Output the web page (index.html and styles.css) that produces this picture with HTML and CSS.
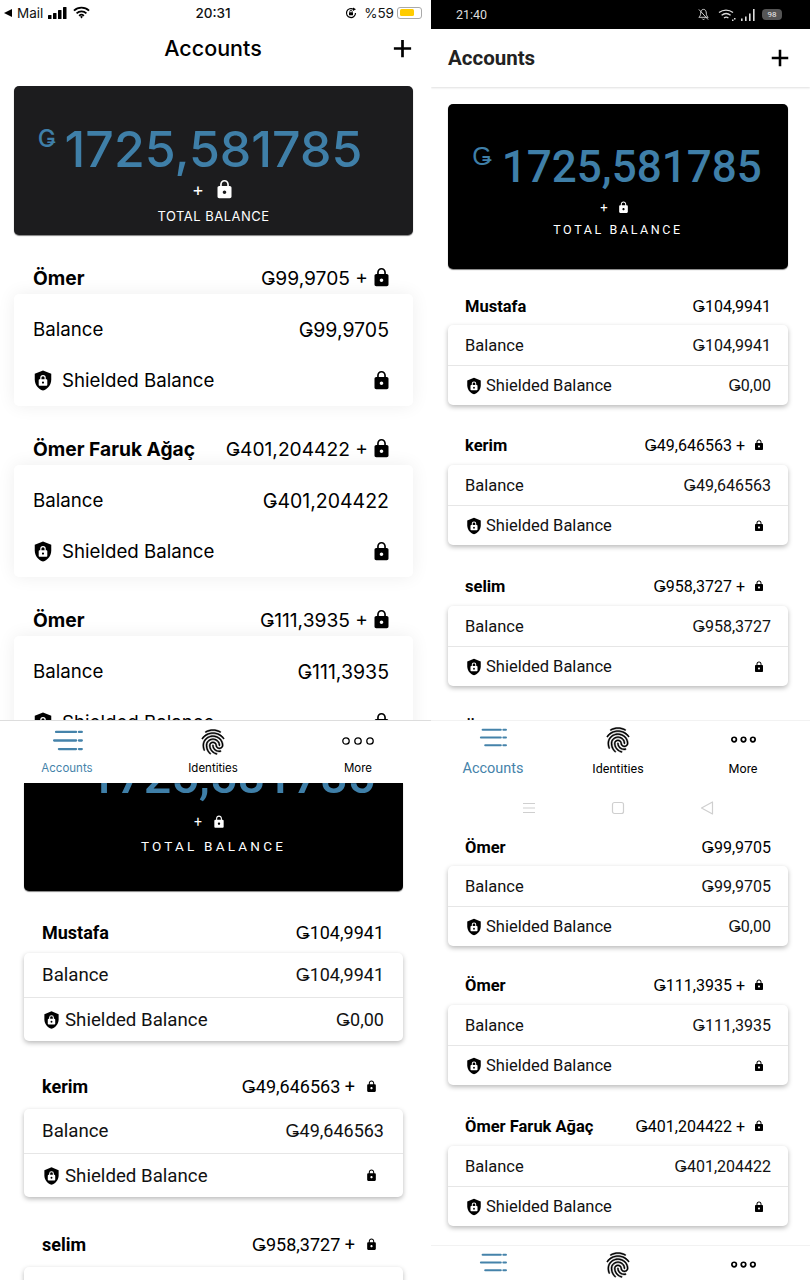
FILE: index.html
```html
<!DOCTYPE html>
<html lang="en">
<head>
    <meta charset="UTF-8">
    <title>Accounts</title>
    <link rel="stylesheet" href="styles.css">
</head>
<body>

<svg class="sprites" aria-hidden="true">
    <symbol id="lock" viewBox="0 0 24 24"><path d="M18 8h-1V6c0-2.760-2.240-5-5-5S7 3.240 7 6v2H6c-1.100 0-2 .9-2 2v10c0 1.100.9 2 2 2h12c1.100 0 2-.9 2-2V10c0-1.100-.9-2-2-2zm-6 9c-1.100 0-2-.9-2-2s.9-2 2-2 2 .9 2 2-.9 2-2 2zm3.100-9H8.900V6c0-1.710 1.390-3.100 3.100-3.100 1.710 0 3.100 1.390 3.100 3.100v2z"/></symbol>
    <symbol id="shield" viewBox="0 0 24 24">
        <path d="M12 1 3 4.600V11c0 5.550 3.840 10.740 9 12 5.160-1.260 9-6.450 9-12V4.600z"/>
        <path fill="#fff" d="M15.600 10.500H15V9a3 3 0 0 0-6 0v1.500h-.6c-.6 0-1.100.5-1.100 1.100v5c0 .6.5 1.100 1.100 1.100h7.200c.6 0 1.100-.5 1.100-1.100v-5c0-.6-.5-1.100-1.100-1.100zM12 15.500a1.200 1.200 0 1 1 0-2.400 1.200 1.200 0 0 1 0 2.400zm1.700-5h-3.400V9a1.700 1.700 0 0 1 3.400 0z"/>
    </symbol>
    <symbol id="plus" viewBox="0 0 24 24"><path d="M12 3v18M3 12h18" fill="none" stroke="currentColor" stroke-width="2.800"/></symbol>
    <symbol id="list" viewBox="0 0 32 22">
        <path d="M4 2h21M2 11h23M7 20h18M28 2h3M28 11h3M28 20h3" fill="none" stroke="currentColor" stroke-width="2.400" stroke-linecap="round"/>
    </symbol>
    <symbol id="fingerprint" viewBox="0 0 24 24"><path d="M17.810 4.470c-.08 0-.16-.02-.23-.06C15.660 3.420 14 3 12.010 3c-1.980 0-3.860.47-5.580 1.410-.24.13-.54.04-.68-.2-.13-.24-.04-.55.2-.68C7.820 2.520 9.860 2 12.010 2c2.130 0 3.990.47 6.030 1.520.25.13.34.43.22.67-.09.18-.26.28-.45.28zM3.500 9.720c-.1 0-.2-.03-.29-.09-.23-.16-.28-.47-.12-.7.99-1.400 2.250-2.500 3.750-3.270C9.980 4.040 14 4.030 17.150 5.650c1.500.77 2.760 1.860 3.750 3.250.16.22.11.54-.12.7-.23.16-.54.11-.7-.12-.9-1.260-2.040-2.250-3.390-2.940-2.870-1.470-6.540-1.470-9.400.01-1.360.7-2.500 1.700-3.400 2.960-.08.14-.23.21-.39.21zm6.250 12.070c-.13 0-.26-.05-.35-.15-.87-.87-1.340-1.430-2.010-2.640-.69-1.230-1.050-2.730-1.050-4.340 0-2.970 2.540-5.390 5.660-5.390s5.660 2.420 5.660 5.390c0 .28-.22.5-.5.5s-.5-.22-.5-.5c0-2.420-2.090-4.390-4.660-4.390s-4.660 1.970-4.660 4.390c0 1.440.32 2.770.93 3.850.64 1.150 1.080 1.640 1.850 2.420.19.2.19.51 0 .71-.11.1-.24.15-.37.15zm7.170-1.850c-1.190 0-2.240-.3-3.100-.89-1.490-1.010-2.380-2.650-2.380-4.390 0-.28.22-.5.5-.5s.5.22.5.5c0 1.410.72 2.740 1.940 3.560.71.48 1.540.71 2.540.71.24 0 .64-.03 1.040-.1.27-.05.53.13.58.41.05.27-.13.53-.41.58-.57.11-1.070.12-1.210.12zM14.910 22c-.04 0-.09-.01-.13-.02-1.590-.44-2.630-1.030-3.720-2.100-1.400-1.390-2.170-3.240-2.170-5.220 0-1.620 1.380-2.940 3.080-2.940s3.080 1.320 3.080 2.940c0 1.070.93 1.940 2.080 1.940s2.080-.87 2.080-1.940c0-3.770-3.250-6.830-7.250-6.830-2.840 0-5.440 1.580-6.610 4.030-.39.81-.59 1.760-.59 2.800 0 .78.07 2.010.67 3.610.1.26-.03.55-.29.64-.26.1-.55-.04-.64-.29-.49-1.310-.73-2.610-.73-3.960 0-1.200.23-2.290.68-3.240 1.330-2.790 4.280-4.600 7.510-4.600 4.550 0 8.250 3.510 8.250 7.830 0 1.620-1.380 2.940-3.080 2.940s-3.080-1.320-3.080-2.940c0-1.070-.93-1.940-2.080-1.940s-2.080.87-2.080 1.940c0 1.710.66 3.310 1.870 4.510.95.94 1.860 1.460 3.270 1.850.27.07.42.35.35.61-.05.23-.26.38-.47.38z" stroke="currentColor" stroke-width=".35"/></symbol>
    <symbol id="dots" viewBox="0 0 32 8">
        <g fill="none" stroke="currentColor" stroke-width="1.300"><circle cx="4" cy="4" r="3.200"/><circle cx="16" cy="4" r="3.200"/><circle cx="28" cy="4" r="3.200"/></g>
    </symbol>
    <symbol id="dots-small" viewBox="0 0 32 8">
        <g fill="none" stroke="currentColor" stroke-width="2.200"><circle cx="4" cy="4" r="2.900"/><circle cx="16" cy="4" r="2.900"/><circle cx="28" cy="4" r="2.900"/></g>
    </symbol>
</svg>

<div class="collage">
    <div class="column column-left">

        <!-- iphone, top left -->
        <section class="pane ios">
            <div class="ios-status">
                <div class="status-side">
                    <span class="back-arrow"></span><span>Mail</span>
                    <svg class="signal" viewBox="0 0 20 12"><rect x="0" y="8" width="3.500" height="4" rx=".6"/><rect x="5" y="6" width="3.500" height="6" rx=".6"/><rect x="10" y="3" width="3.500" height="9" rx=".6"/><rect x="15" y="0" width="3.500" height="12" rx=".6"/></svg>
                    <svg class="wifi" viewBox="0 0 18 13"><path d="M1 4.600a11.500 11.500 0 0 1 16 0M3.800 7.400a7.500 7.500 0 0 1 10.400 0M6.500 10a3.600 3.600 0 0 1 5 0" fill="none" stroke="#000" stroke-width="1.900"/><path d="M7.500 11 9 12.800l1.500-1.800a2 2 0 0 0-3 0z"/></svg>
                </div>
                <div class="status-time">20:31</div>
                <div class="status-side status-end">
                    <svg class="rotation" viewBox="0 0 12 12"><path d="M10.500 6A4.500 4.500 0 1 1 8.500 2.300" fill="none" stroke="#000" stroke-width="1.200"/><path d="M8 .5v3.400L11 2.300z"/><rect x="4" y="5.300" width="4" height="3" rx=".5"/><path d="M4.800 5.500V4.500a1.200 1.200 0 0 1 2.400 0v1" fill="none" stroke="#000" stroke-width=".8"/></svg>
                    <span>%59</span>
                    <span class="ios-battery"><span class="ios-battery-level"></span></span>
                </div>
            </div>
            <header class="bar">
                <h1 class="bar-title">Accounts</h1>
                <svg class="bar-plus"><use href="#plus"/></svg>
            </header>
            <div class="scroll">
                <div class="total">
                    <div class="total-amount"><span class="total-sign">Ǥ</span><span>1725,581785</span></div>
                    <div class="total-plus">+ <svg class="lock"><use href="#lock"/></svg></div>
                    <div class="total-label">TOTAL BALANCE</div>
                </div>
                <div class="account">
                    <div class="account-head"><span class="account-name">Ömer</span><span class="account-sum">Ǥ99,9705 + <svg class="lock"><use href="#lock"/></svg></span></div>
                    <div class="card">
                        <div class="card-row"><span>Balance</span><span>Ǥ99,9705</span></div>
                        <div class="card-row"><span class="shielded"><svg class="shield"><use href="#shield"/></svg>Shielded Balance</span><svg class="lock"><use href="#lock"/></svg></div>
                    </div>
                </div>
                <div class="account">
                    <div class="account-head"><span class="account-name">Ömer Faruk Ağaç</span><span class="account-sum">Ǥ401,204422 + <svg class="lock"><use href="#lock"/></svg></span></div>
                    <div class="card">
                        <div class="card-row"><span>Balance</span><span>Ǥ401,204422</span></div>
                        <div class="card-row"><span class="shielded"><svg class="shield"><use href="#shield"/></svg>Shielded Balance</span><svg class="lock"><use href="#lock"/></svg></div>
                    </div>
                </div>
                <div class="account">
                    <div class="account-head"><span class="account-name">Ömer</span><span class="account-sum">Ǥ111,3935 + <svg class="lock"><use href="#lock"/></svg></span></div>
                    <div class="card">
                        <div class="card-row"><span>Balance</span><span>Ǥ111,3935</span></div>
                        <div class="card-row"><span class="shielded"><svg class="shield"><use href="#shield"/></svg>Shielded Balance</span><svg class="lock"><use href="#lock"/></svg></div>
                    </div>
                </div>
            </div>
            <nav class="tabs">
                <div class="tab tab-active"><svg class="tab-list"><use href="#list"/></svg><span>Accounts</span></div>
                <div class="tab"><svg class="tab-print"><use href="#fingerprint"/></svg><span>Identities</span></div>
                <div class="tab"><svg class="tab-dots"><use href="#dots"/></svg><span>More</span></div>
            </nav>
        </section>

        <!-- android, bottom left, scrolled -->
        <section class="pane droid-large">
            <div class="scroll">
                <div class="total total-cut">
                    <div class="total-amount"><span>1725,581785</span></div>
                    <div class="total-plus">+ <svg class="lock"><use href="#lock"/></svg></div>
                    <div class="total-label">TOTAL BALANCE</div>
                </div>
                <div class="account">
                    <div class="account-head"><span class="account-name">Mustafa</span><span class="account-sum">Ǥ104,9941</span></div>
                    <div class="card">
                        <div class="card-row"><span>Balance</span><span>Ǥ104,9941</span></div>
                        <div class="card-row"><span class="shielded"><svg class="shield"><use href="#shield"/></svg>Shielded Balance</span><span>Ǥ0,00</span></div>
                    </div>
                </div>
                <div class="account">
                    <div class="account-head"><span class="account-name">kerim</span><span class="account-sum">Ǥ49,646563 + <svg class="lock"><use href="#lock"/></svg></span></div>
                    <div class="card">
                        <div class="card-row"><span>Balance</span><span>Ǥ49,646563</span></div>
                        <div class="card-row"><span class="shielded"><svg class="shield"><use href="#shield"/></svg>Shielded Balance</span><svg class="lock"><use href="#lock"/></svg></div>
                    </div>
                </div>
                <div class="account">
                    <div class="account-head"><span class="account-name">selim</span><span class="account-sum">Ǥ958,3727 + <svg class="lock"><use href="#lock"/></svg></span></div>
                    <div class="card">
                        <div class="card-row"><span>Balance</span><span>Ǥ958,3727</span></div>
                    </div>
                </div>
            </div>
        </section>
    </div>

    <div class="column column-right">

        <!-- android, top right -->
        <section class="pane droid">
            <div class="droid-status">
                <span>21:40</span>
                <div class="status-side">
                    <svg class="bell" viewBox="0 0 14 14"><path d="M7 1.500C4.800 1.500 4 3.500 4 5.500 4 8 3 9 2 10h10c-1-1-2-2-2-4.500 0-2-.8-4-3-4zM5.700 11.500a1.400 1.400 0 0 0 2.600 0M2 1.500l10 11" fill="none" stroke="#ddd" stroke-width="1"/></svg>
                    <svg class="wifi" viewBox="0 0 18 13"><path d="M1 4.600a11.500 11.500 0 0 1 14 0M3.600 7.200a7.500 7.500 0 0 1 9 0M6 10a3.600 3.600 0 0 1 4.400 0" fill="none" stroke="#ddd" stroke-width="1.300"/><path d="M16 10h1.500v1.500H16zM14 11.500h1.500V13H14z" fill="#ddd"/></svg>
                    <svg class="signal" viewBox="0 0 15 12"><g fill="#ddd"><rect x="0" y="9.500" width="1.600" height="2.500"/><rect x="4" y="7.500" width="1.600" height="4.500"/><rect x="8" y="4.500" width="1.600" height="7.500"/><rect x="12" y="0" width="1.600" height="12"/></g></svg>
                    <span class="droid-battery">98</span>
                </div>
            </div>
            <header class="bar">
                <h1 class="bar-title">Accounts</h1>
                <svg class="bar-plus"><use href="#plus"/></svg>
            </header>
            <div class="scroll">
                <div class="total">
                    <div class="total-amount"><span class="total-sign">Ǥ</span><span>1725,581785</span></div>
                    <div class="total-plus">+ <svg class="lock"><use href="#lock"/></svg></div>
                    <div class="total-label">TOTAL BALANCE</div>
                </div>
                <div class="account">
                    <div class="account-head"><span class="account-name">Mustafa</span><span class="account-sum">Ǥ104,9941</span></div>
                    <div class="card">
                        <div class="card-row"><span>Balance</span><span>Ǥ104,9941</span></div>
                        <div class="card-row"><span class="shielded"><svg class="shield"><use href="#shield"/></svg>Shielded Balance</span><span>Ǥ0,00</span></div>
                    </div>
                </div>
                <div class="account">
                    <div class="account-head"><span class="account-name">kerim</span><span class="account-sum">Ǥ49,646563 + <svg class="lock"><use href="#lock"/></svg></span></div>
                    <div class="card">
                        <div class="card-row"><span>Balance</span><span>Ǥ49,646563</span></div>
                        <div class="card-row"><span class="shielded"><svg class="shield"><use href="#shield"/></svg>Shielded Balance</span><svg class="lock"><use href="#lock"/></svg></div>
                    </div>
                </div>
                <div class="account">
                    <div class="account-head"><span class="account-name">selim</span><span class="account-sum">Ǥ958,3727 + <svg class="lock"><use href="#lock"/></svg></span></div>
                    <div class="card">
                        <div class="card-row"><span>Balance</span><span>Ǥ958,3727</span></div>
                        <div class="card-row"><span class="shielded"><svg class="shield"><use href="#shield"/></svg>Shielded Balance</span><svg class="lock"><use href="#lock"/></svg></div>
                    </div>
                </div>
                <div class="account">
                    <div class="account-head"><span class="account-name">Ömer</span></div>
                </div>
            </div>
            <nav class="tabs">
                <div class="tab tab-active"><svg class="tab-list"><use href="#list"/></svg><span>Accounts</span></div>
                <div class="tab"><svg class="tab-print"><use href="#fingerprint"/></svg><span>Identities</span></div>
                <div class="tab"><svg class="tab-dots"><use href="#dots-small"/></svg><span>More</span></div>
            </nav>
            <div class="droid-nav">
                <svg viewBox="0 0 14 14"><path d="M1 2.500h12M1 7h12M1 11.500h12" fill="none" stroke="#cfcfcf" stroke-width="1.200"/></svg>
                <svg viewBox="0 0 14 14"><rect x="1.500" y="1.500" width="11" height="11" rx="2" fill="none" stroke="#cfcfcf" stroke-width="1.200"/></svg>
                <svg viewBox="0 0 14 14"><path d="M12.500 1v12L1.500 7z" fill="none" stroke="#cfcfcf" stroke-width="1.200" stroke-linejoin="round"/></svg>
            </div>
        </section>

        <!-- android, bottom right, scrolled -->
        <section class="pane droid droid-scrolled">
            <div class="scroll">
                <div class="account">
                    <div class="account-head"><span class="account-name">Ömer</span><span class="account-sum">Ǥ99,9705</span></div>
                    <div class="card">
                        <div class="card-row"><span>Balance</span><span>Ǥ99,9705</span></div>
                        <div class="card-row"><span class="shielded"><svg class="shield"><use href="#shield"/></svg>Shielded Balance</span><span>Ǥ0,00</span></div>
                    </div>
                </div>
                <div class="account">
                    <div class="account-head"><span class="account-name">Ömer</span><span class="account-sum">Ǥ111,3935 + <svg class="lock"><use href="#lock"/></svg></span></div>
                    <div class="card">
                        <div class="card-row"><span>Balance</span><span>Ǥ111,3935</span></div>
                        <div class="card-row"><span class="shielded"><svg class="shield"><use href="#shield"/></svg>Shielded Balance</span><svg class="lock"><use href="#lock"/></svg></div>
                    </div>
                </div>
                <div class="account">
                    <div class="account-head"><span class="account-name">Ömer Faruk Ağaç</span><span class="account-sum">Ǥ401,204422 + <svg class="lock"><use href="#lock"/></svg></span></div>
                    <div class="card">
                        <div class="card-row"><span>Balance</span><span>Ǥ401,204422</span></div>
                        <div class="card-row"><span class="shielded"><svg class="shield"><use href="#shield"/></svg>Shielded Balance</span><svg class="lock"><use href="#lock"/></svg></div>
                    </div>
                </div>
            </div>
            <nav class="tabs">
                <div class="tab tab-active"><svg class="tab-list"><use href="#list"/></svg></div>
                <div class="tab"><svg class="tab-print"><use href="#fingerprint"/></svg></div>
                <div class="tab"><svg class="tab-dots"><use href="#dots-small"/></svg></div>
            </nav>
        </section>
    </div>
</div>

</body>
</html>
```

FILE: styles.css
```css
html, body {
    margin: 0;
    padding: 0;
    background: #fff;
}
body {
    width: 810px;
    height: 1280px;
    overflow: hidden;
    color: #000;
    font-family: Roboto, sans-serif;
}
.sprites {
    display: none;
}
svg {
    display: block;
    flex: none;
}
h1 {
    margin: 0;
}

/* four screenshots side by side */
.collage {
    display: flex;
    height: 1280px;
}
.column {
    display: flex;
    flex-direction: column;
}
.column-left {
    width: 431px;
}
.column-right {
    width: 379px;
}
.pane {
    display: flex;
    flex-direction: column;
    overflow: hidden;
    background: #fff;
}
.scroll {
    flex: 1;
    min-height: 0;
    overflow: hidden;
}

/* shared parts */
.status-side {
    display: flex;
    align-items: center;
}
.bar {
    display: flex;
    align-items: center;
    justify-content: space-between;
    background: #fff;
}
.total {
    display: flex;
    flex-direction: column;
    align-items: center;
    box-sizing: border-box;
    background: #000;
    color: #fff;
    border-radius: 5px;
    box-shadow: 0 1px 1px rgba(0, 0, 0, .5);
}
.total-amount {
    display: flex;
    align-items: flex-start;
    color: #3f7fa8;
}
.total-plus {
    display: flex;
    align-items: center;
}
.account-head,
.card-row,
.account-sum,
.shielded {
    display: flex;
    align-items: center;
}
.account-head,
.card-row {
    justify-content: space-between;
}
.account-name {
    font-weight: 700;
}
.card {
    background: #fff;
    border-radius: 5px;
}
.tabs {
    display: grid;
    background: #fff;
    flex: none;
    box-sizing: border-box;
    overflow: hidden;
}
.tab {
    display: flex;
    flex-direction: column;
    align-items: center;
}
.tab-active {
    color: #4583aa;
}

/* iphone pane */
.ios {
    height: 783px;
    font-family: Inter, sans-serif;
}
.ios-status {
    display: grid;
    grid-template-columns: 1fr auto 1fr;
    align-items: center;
    height: 25px;
    padding: 0 9px 0 4px;
    font-size: 13.500px;
    color: #111;
}
.status-time {
    font-weight: 500;
}
.status-end {
    justify-content: flex-end;
}
.back-arrow {
    width: 0;
    height: 0;
    border: 4.500px solid transparent;
    border-right: 8px solid #000;
    border-left: 0;
    margin-right: 5px;
}
.ios .signal {
    width: 20px;
    height: 12px;
    margin: 0 5px;
}
.ios .wifi {
    width: 17px;
    height: 13px;
}
.rotation {
    width: 12px;
    height: 12px;
    margin-right: 7px;
}
.ios-battery {
    box-sizing: border-box;
    width: 25px;
    height: 12px;
    margin: 0 0 0 3px;
    padding: 1.500px;
    border: 1px solid #aaa;
    border-radius: 3px;
}
.ios-battery-level {
    display: block;
    width: 14px;
    height: 7px;
    background: #fc0;
    border-radius: 1.500px;
}
.ios .bar {
    height: 46px;
    justify-content: center;
    padding-right: 5px;
    position: relative;
}
.ios .bar-title {
    font-size: 21.500px;
    font-weight: 500;
}
.ios .bar-plus {
    position: absolute;
    right: 17px;
    top: 12px;
    width: 23px;
    height: 23px;
}
.ios .scroll {
    padding: 15px 18px 0 14px;
}
.ios .total {
    height: 149px;
    padding-top: 37px;
    background: #1c1c1e;
}
.ios .total-amount {
    font-size: 50px;
    font-weight: 500;
    line-height: 52px;
    padding-right: 27px;
}
.ios .total-sign {
    font-size: 24px;
    line-height: 32px;
    margin-right: 9px;
}
.ios .total-plus {
    gap: 10px;
    height: 26px;
    margin-top: 1px;
    font-size: 18px;
}
.ios .total-plus .lock {
    width: 21px;
    height: 21px;
    margin: 0;
    fill: #fff;
}
.ios .total-label {
    margin-top: 2px;
    font-size: 13px;
    line-height: 24px;
    letter-spacing: .5px;
}
.ios .account {
    padding-top: 26px;
}
.ios .account-head {
    height: 33px;
    padding: 0 24px 0 19px;
    font-size: 19.200px;
}
.ios .account-sum {
    gap: 3px;
}
.ios .lock {
    width: 21px;
    height: 21px;
    margin-right: -3px;
}
.ios .card {
    padding-top: 10px;
    box-shadow: 0 0 18px rgba(0, 0, 0, .07);
}
.ios .card-row {
    height: 51px;
    padding: 0 24px 0 19px;
    font-size: 19.500px;
}
.ios .card-row > span:first-child {
    font-size: 18.700px;
}
.ios .shield {
    width: 22px;
    height: 23px;
    margin: 0 8px 0 -1px;
}
.ios .tabs {
    height: 63px;
    padding-top: 7px;
    grid-template-columns: 134px 158px 132px;
    border-top: 1px solid #ddd;
    font-size: 11.500px;
}
.ios .tab span {
    line-height: 14px;
}
.ios .tab-list {
    width: 31px;
    height: 21px;
    margin: 2px 0 10px;
}
.ios .tab-print {
    width: 30px;
    height: 30px;
    margin: -1px 0 4px;
}
.ios .tab-dots {
    width: 32px;
    height: 10px;
    margin: 8px 0 15px;
}

/* android panes */
.droid {
    height: 825px;
}
.droid-status {
    display: flex;
    align-items: center;
    justify-content: space-between;
    height: 29px;
    padding: 0 28px 0 25px;
    background: #000;
    color: #ddd;
    font-size: 12.500px;
}
.droid-status .status-side {
    gap: 5px;
}
.bell {
    width: 13px;
    height: 13px;
    margin-right: 3px;
}
.droid-status .wifi {
    width: 18px;
    height: 13px;
}
.droid-status .signal {
    width: 15px;
    height: 12px;
}
.droid-battery {
    box-sizing: border-box;
    width: 20px;
    height: 11px;
    border-radius: 4px;
    margin-left: 1px;
    background: #555;
    color: #eee;
    font-size: 8px;
    line-height: 11px;
    text-align: center;
}
.droid .bar {
    height: 58px;
    padding: 0 19px 0 17px;
    box-shadow: 0 1px 2px rgba(0, 0, 0, .13);
    position: relative;
}
.droid .bar-title {
    font-size: 20.500px;
    font-weight: 700;
    color: #222;
}
.droid .bar-plus {
    width: 22px;
    height: 22px;
}
.droid .scroll {
    padding: 17px 22px 0 17px;
}
.droid .total {
    height: 165px;
    padding-top: 36px;
}
.droid .total-amount {
    font-size: 44px;
    font-weight: 500;
    line-height: 54px;
    padding-right: 2px;
}
.droid .total-sign {
    font-size: 25px;
    line-height: 30px;
    margin: 2px 10px 0 0;
    font-weight: 500;
}
.droid .total-plus {
    gap: 9px;
    height: 22px;
    margin-top: 2px;
    padding-right: 6px;
    font-size: 13px;
}
.droid .total-plus .lock {
    width: 13px;
    height: 13px;
    margin: 0;
    fill: #fff;
}
.droid .total-label {
    margin-top: 3px;
    font-size: 12.500px;
    line-height: 18px;
    letter-spacing: 2.600px;
}
.droid .account {
    padding-top: 31px;
}
.droid .total + .account {
    padding-top: 26px;
}
.droid .total + .account + .account {
    padding-top: 30px;
}
.droid .account-head {
    box-sizing: border-box;
    height: 30px;
    padding: 0 17px 10px;
    font-size: 16px;
}
.droid .total + .account .account-head {
    padding-bottom: 8px;
}
.droid .account-name {
    font-size: 16.500px;
}
.droid .account-sum {
    font-size: 16px;
    gap: 3px;
}
.droid .lock {
    width: 12px;
    height: 12px;
    margin: 0 6px 0 5px;
}
.droid .card {
    box-shadow: 0 2px 5px rgba(0, 0, 0, .28);
}
.droid .card-row {
    height: 40px;
    box-sizing: border-box;
    padding: 0 17px;
    font-size: 16px;
    color: #111;
}
.droid .card-row > span:first-child {
    font-size: 16.500px;
}
.droid .card-row + .card-row {
    border-top: 1px solid #e6e6e6;
}
.droid .shield {
    width: 18px;
    height: 20px;
    margin-right: 3px;
}
.droid .tabs {
    height: 70px;
    padding-top: 5px;
    grid-template-columns: 124px 126px 124px;
    border-top: 1px solid #f2f2f2;
    font-size: 12.500px;
}
.droid .tab span {
    line-height: 14px;
}
.droid .tab-active {
    font-size: 14.500px;
}
.droid .tab-list {
    width: 28px;
    height: 19px;
    margin: 2px 0 15px;
}
.droid .tab-print {
    width: 30px;
    height: 30px;
    margin: -1px 0 7px;
}
.droid .tab-dots {
    width: 25px;
    height: 7px;
    margin: 10px 0 19px;
}
.droid-nav {
    display: flex;
    justify-content: center;
    align-items: center;
    gap: 75px;
    height: 35px;
    padding-right: 6px;
    background: #fff;
}
.droid-nav svg {
    width: 14px;
    height: 14px;
}

/* scrolled, no status bar or header */
.droid-scrolled {
    height: 455px;
}
.droid-scrolled .scroll {
    padding-top: 11px;
}
.droid-scrolled .account:first-child {
    padding-top: 0;
}
.droid-scrolled .account:first-child .account-head {
    padding-bottom: 7px;
}
.droid-scrolled .account:nth-child(2) {
    padding-top: 29px;
}
.droid-scrolled .tabs {
    height: 35px;
}

/* larger android pane */
.droid-large {
    flex: 1;
    min-height: 0;
}
.droid-large .scroll {
    padding: 0 28px 0 24px;
}
.total-cut {
    height: 108px;
    justify-content: flex-end;
    overflow: hidden;
    border-radius: 0 0 5px 5px;
    padding-bottom: 37px;
}
.total-cut .total-amount {
    font-size: 48.500px;
    font-weight: 500;
    line-height: 50px;
    margin-left: 37px;
    flex: none;
}
.total-cut .total-plus {
    flex: none;
    gap: 10px;
    height: 22px;
    padding-right: 7px;
    font-size: 14px;
    margin-top: 9px;
}
.total-cut .lock {
    width: 14px;
    height: 14px;
    fill: #fff;
}
.total-cut .total-label {
    flex: none;
    margin-top: 5px;
    font-size: 13.500px;
    letter-spacing: 3.200px;
}
.droid-large .account {
    padding-top: 32px;
}
.droid-large .total + .account {
    padding-top: 26px;
}
.droid-large .account:nth-child(4) {
    padding-top: 34px;
}
.droid-large .account-head {
    box-sizing: border-box;
    height: 36px;
    padding: 0 19px 9px 18px;
    font-size: 18px;
}
.droid-large .total + .account .account-head {
    padding-bottom: 5px;
}
.droid-large .account-sum {
    gap: 4px;
    font-size: 18px;
}
.droid-large .account-head .lock {
    width: 13px;
    height: 13px;
    margin-left: 6px;
    margin-right: 6px;
}
.droid-large .card {
    box-shadow: 0 2px 5px rgba(0, 0, 0, .28);
}
.droid-large .card-row {
    height: 44px;
    box-sizing: border-box;
    padding: 0 19px 0 18px;
    font-size: 18px;
    color: #111;
}
.droid-large .card-row > span:first-child {
    font-size: 18.700px;
}
.droid-large .card-row + .card-row {
    border-top: 1px solid #e6e6e6;
}
.droid-large .card-row > .lock {
    width: 13px;
    height: 13px;
    margin-right: 6px;
}
.droid-large .shield {
    width: 19px;
    height: 20px;
    margin-right: 4px;
}
```
